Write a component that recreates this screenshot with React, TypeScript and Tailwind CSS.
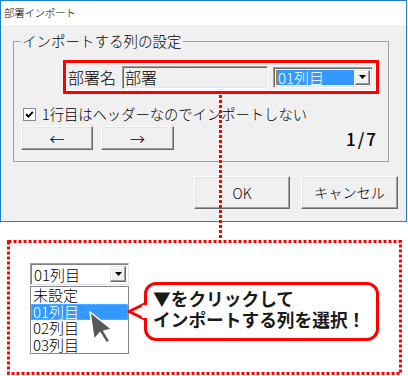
import React from "react";

function RaisedBtn({ className, children }: { className?: string; children?: React.ReactNode }) {
  return (
    <div
      className={
        "flex items-center justify-center bg-[#f0f0f0] border border-t-white border-l-white border-r-[#696969] border-b-[#696969] shadow-[inset_-1px_-1px_0_#a0a0a0,inset_1px_1px_0_#e3e3e3] " +
        (className ?? "")
      }
    >
      {children}
    </div>
  );
}

function DropBtn({ className }: { className?: string }) {
  return (
    <div
      className={
        "flex items-center justify-center bg-[#f0f0f0] border border-t-[#e3e3e3] border-l-[#e3e3e3] border-r-[#696969] border-b-[#696969] shadow-[inset_-1px_-1px_0_#a0a0a0,inset_1px_1px_0_#ffffff] " +
        (className ?? "")
      }
    >
      <svg width="7" height="4" viewBox="0 0 7 4">
        <path d="M0 0h7l-3.5 4z" fill="#000" />
      </svg>
    </div>
  );
}

export default function App() {
  return (
    <div className="relative w-[408px] h-[376px] bg-white font-['Noto_Sans_CJK_JP',sans-serif] text-black overflow-hidden">
      {/* Dialog window */}
      <div className="w-[407px] h-[222px] border border-[#1c7fd6] flex flex-col font-light">
        <div className="h-[24px] shrink-0 bg-white flex items-center pl-[3px] text-[10.5px] tracking-[-0.3px] leading-none">
          部署インポート
        </div>
        <div className="flex-1 bg-[#f0f0f0] flex flex-col">
          <fieldset className="ml-[12px] mt-[7px] w-[376px] border border-[#a0a0a0] pb-[11px]">
            <legend className="ml-[7px] px-[1px] text-[14.5px] leading-[18px]">インポートする列の設定</legend>
            <div className="flex flex-col">
              {/* highlighted row */}
              <div className="ml-[49px] mt-[10px] w-[316px] h-[34px] border-[3px] border-[#ff0000]">
                <div className="h-full border border-white flex items-center pl-[1px]">
                  <span className="text-[16px] leading-none w-[48px]">部署名</span>
                  <div className="ml-[6px] w-[146px] h-[23px] bg-[#f0f0f0] border border-t-[#a0a0a0] border-l-[#a0a0a0] border-b-white border-r-white shadow-[inset_1px_1px_0_#696969,inset_-1px_-1px_0_#e3e3e3] flex items-center pl-[2px] text-[16px] leading-none">
                    部署
                  </div>
                  <div className="ml-[5px] w-[100px] h-[21px] bg-white border border-t-[#a0a0a0] border-l-[#a0a0a0] border-b-white border-r-white shadow-[inset_1px_1px_0_#696969,inset_-1px_-1px_0_#e3e3e3] flex items-stretch p-[2px] gap-[1px]">
                    <div className="flex-1 bg-[#3399ff] border border-dotted border-[#b07a30] flex items-center pl-[1px] text-white text-[15px] leading-none">
                      01列目
                    </div>
                    <DropBtn className="w-[15px]" />
                  </div>
                </div>
              </div>
              {/* checkbox row */}
              <div className="ml-[9px] mt-[14px] h-[13px] flex items-center gap-[6px]">
                <div className="w-[13px] h-[13px] bg-white border border-[#8a8a8a] flex items-center justify-center">
                  <svg width="9" height="9" viewBox="0 0 9 9">
                    <path d="M1.2 4.2 L3.5 6.6 L7.8 1.8" fill="none" stroke="#000" strokeWidth="2" />
                  </svg>
                </div>
                <span className="text-[14.3px] leading-none">1行目はヘッダーなのでインポートしない</span>
              </div>
              {/* arrow buttons row */}
              <div className="mt-[5px] flex items-center pl-[7px] pr-[10px]">
                <RaisedBtn className="w-[72px] h-[24px] text-[15px] leading-none">←</RaisedBtn>
                <RaisedBtn className="ml-[8px] w-[73px] h-[24px] text-[15px] leading-none">→</RaisedBtn>
                <span className="ml-auto text-[17px] font-medium tracking-[2px] leading-none">1/7</span>
              </div>
            </div>
          </fieldset>
          <div className="mt-[14px] flex justify-end gap-[11px] pr-[8px]">
            <RaisedBtn className="w-[96px] h-[33px] text-[14px] leading-none">OK</RaisedBtn>
            <RaisedBtn className="w-[97px] h-[33px] text-[14.2px] leading-none">キャンセル</RaisedBtn>
          </div>
        </div>
      </div>

      {/* Annotation area */}
      <div className="flex pl-[30px] pt-[41px]">
        <div className="w-[99px] flex flex-col font-light">
          <div className="h-[22px] bg-white border border-t-[#a0a0a0] border-l-[#a0a0a0] border-b-[#e3e3e3] border-r-[#e3e3e3] shadow-[inset_1px_1px_0_#828282] flex items-stretch p-[2px]">
            <div className="flex-1 flex items-center pl-[1px] text-[15px] leading-none">01列目</div>
            <DropBtn className="w-[16px]" />
          </div>
          <div className="mt-[1px] bg-white border border-[#828790] flex flex-col text-[15px]">
            <div className="h-[16.5px] leading-[16.5px] pl-[2px]">未設定</div>
            <div className="h-[16.5px] leading-[14.5px] pl-[1px] bg-[#3399ff] text-white border border-dotted border-[#e0a060]">01列目</div>
            <div className="h-[16.5px] leading-[16.5px] pl-[2px]">02列目</div>
            <div className="h-[16.5px] leading-[16.5px] pl-[2px]">03列目</div>
          </div>
        </div>
        <div className="relative ml-[15px] mt-[19px] w-[235px] h-[59px] border-[3px] border-[#ff0000] rounded-[12px] bg-white pl-[6px] pt-[3px] font-bold text-[17.7px] leading-[21px] text-[#1a1a1a]">
          <div>▼をクリックして</div>
          <div>インポートする列を選択！</div>
          <svg className="absolute left-[-20px] top-[17px] overflow-visible" width="26" height="20" viewBox="0 0 26 20">
            <path d="M18.5 1.5 L2 9.5 L18.5 17.5" fill="#fff" stroke="#ff0000" strokeWidth="3" strokeLinejoin="round" strokeLinecap="round" />
            <rect x="15" y="3" width="8" height="13" fill="#fff" />
          </svg>
        </div>
      </div>

      {/* mouse cursor */}
      <svg className="absolute left-[80px] top-[302px] pointer-events-none overflow-visible" width="40" height="50" viewBox="0 0 40 50">
        <g transform="translate(10 10) rotate(-8) scale(1.75)">
          <path d="M0 0 L0 16 L4 12.5 L6.8 19 L9 18 L6.3 11.8 L11 11.5 Z" fill="#595959" stroke="#fff" strokeWidth="0.9" strokeLinejoin="round" />
        </g>
      </svg>

      {/* dotted annotation lines */}
      <svg className="absolute inset-0 pointer-events-none" width="408" height="376" viewBox="0 0 408 376">
        <line x1="220.5" y1="95" x2="220.5" y2="240" stroke="#ff0000" strokeWidth="3" strokeDasharray="3 2" />
        <rect x="8.5" y="241.5" width="392" height="132" fill="none" stroke="#ff0000" strokeWidth="3" strokeDasharray="3 2" />
      </svg>
    </div>
  );
}
